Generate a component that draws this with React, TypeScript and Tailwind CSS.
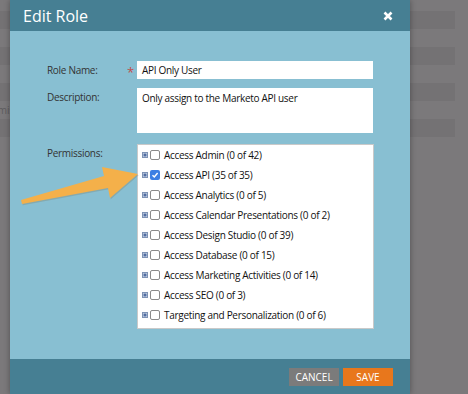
import React from "react";

const permissions = [
  { label: "Access Admin (0 of 42)", checked: false },
  { label: "Access API (35 of 35)", checked: true },
  { label: "Access Analytics (0 of 5)", checked: false },
  { label: "Access Calendar Presentations (0 of 2)", checked: false },
  { label: "Access Design Studio (0 of 39)", checked: false },
  { label: "Access Database (0 of 15)", checked: false },
  { label: "Access Marketing Activities (0 of 14)", checked: false },
  { label: "Access SEO (0 of 3)", checked: false },
  { label: "Targeting and Personalization (0 of 6)", checked: false },
];

const font = { fontFamily: '"Open Sans", "Liberation Sans", sans-serif' };

const ExpandIcon = () => (
  <svg width="6" height="6" viewBox="0 0 6 6" className="shrink-0">
    <rect x="0" y="0" width="6" height="6" fill="#b8c6dc" />
    <rect x="0.5" y="0.5" width="5" height="5" fill="none" stroke="#7f93b5" strokeWidth="1" />
    <path d="M1.5 3h3M3 1.5v3" stroke="#2f4f8f" strokeWidth="1" />
  </svg>
);

const Checkbox = ({ checked }: { checked: boolean }) =>
  checked ? (
    <span className="w-[10px] h-[10px] rounded-[2px] bg-[#3d7fe3] flex items-center justify-center shrink-0">
      <svg width="8" height="8" viewBox="0 0 8 8">
        <path d="M1.5 4.2l1.8 1.8L6.6 2" stroke="white" strokeWidth="1.4" fill="none" />
      </svg>
    </span>
  ) : (
    <span className="w-[10px] h-[10px] rounded-[2px] border border-[#8a8a8a] bg-white shrink-0" />
  );

const BackgroundRows = () => (
  <div className="flex flex-col pt-[11px] gap-[18px]">
    {[0, 1, 2, 3].map((i) => (
      <div key={i} className="h-[18px] w-[455px] bg-[#747274]" />
    ))}
  </div>
);

export default function App() {
  return (
    <div className="relative w-[468px] h-[394px] bg-[#7b797b] overflow-hidden" style={font}>
      <BackgroundRows />
      <div className="absolute left-[-18px] top-[103px] text-[10px] text-[#5e5c5e]">Permissions</div>

      {/* modal */}
      <div className="absolute left-[10px] top-0 w-[400px] h-[394px] flex flex-col shadow-[0_0_6px_rgba(0,0,0,0.35)]">
        <div className="h-[31px] bg-[#467f93] flex items-center justify-between pl-[13px] pr-[17px]">
          <span className="text-white text-[16px] leading-none">Edit Role</span>
          <svg width="10" height="10" viewBox="0 0 10 10">
            <path d="M1.5 1.5l7 7M8.5 1.5l-7 7" stroke="white" strokeWidth="2.6" />
          </svg>
        </div>

        <div className="flex-1 bg-[#88bfd2] pt-[30px] pl-[37px]">
          <div className="grid grid-cols-[80px_10px_236px] gap-y-[9px] text-[10px] tracking-[-0.3px] text-[#333]">
            <div className="h-[18px] flex items-center">Role Name:</div>
            <div className="h-[18px] flex items-center text-[#c0504d] text-[13px] pt-[5px]">*</div>
            <div className="h-[18px] bg-white flex items-center px-[5px] text-[#111]">API Only User</div>

            <div className="pt-[2px]">Description:</div>
            <div />
            <div className="h-[45px] bg-white px-[5px] pt-[3px] text-[#111]">
              Only assign to the Marketo API user
            </div>

            <div className="pt-[2px] mt-[2px]">Permissions:</div>
            <div />
            <div className="mt-[2px] h-[185px] w-[237px] bg-white border border-[#c9c9c9] pl-[4px]">
              {permissions.map((p) => (
                <div key={p.label} className="h-[20px] flex items-center gap-[2px] text-[#111]">
                  <ExpandIcon />
                  <Checkbox checked={p.checked} />
                  <span className="ml-[2px] whitespace-nowrap">{p.label}</span>
                </div>
              ))}
            </div>
          </div>
        </div>

        <div className="h-[35px] bg-[#467f93] flex items-center justify-end gap-[4px] pr-[17px]">
          <button className="w-[50px] h-[18px] bg-[#7b7b7b] text-white text-[10px] leading-none">CANCEL</button>
          <button className="w-[50px] h-[18px] bg-[#e8771c] text-white text-[10px] leading-none">SAVE</button>
        </div>
      </div>

      {/* callout arrow */}
      <svg className="absolute left-0 top-0" width="150" height="220" viewBox="0 0 150 220">
        <path
          d="M21 200 L104 176 L102 167 L138 174 L110 198 L108 188 L22 204 Z"
          fill="#7a6a48"
          opacity="0.25"
          transform="translate(0.8 1.2)"
        />
        <path d="M21 200 L104 176 L102 167 L138 174 L110 198 L108 188 L22 204 Z" fill="#f4b04a" />
      </svg>
    </div>
  );
}
